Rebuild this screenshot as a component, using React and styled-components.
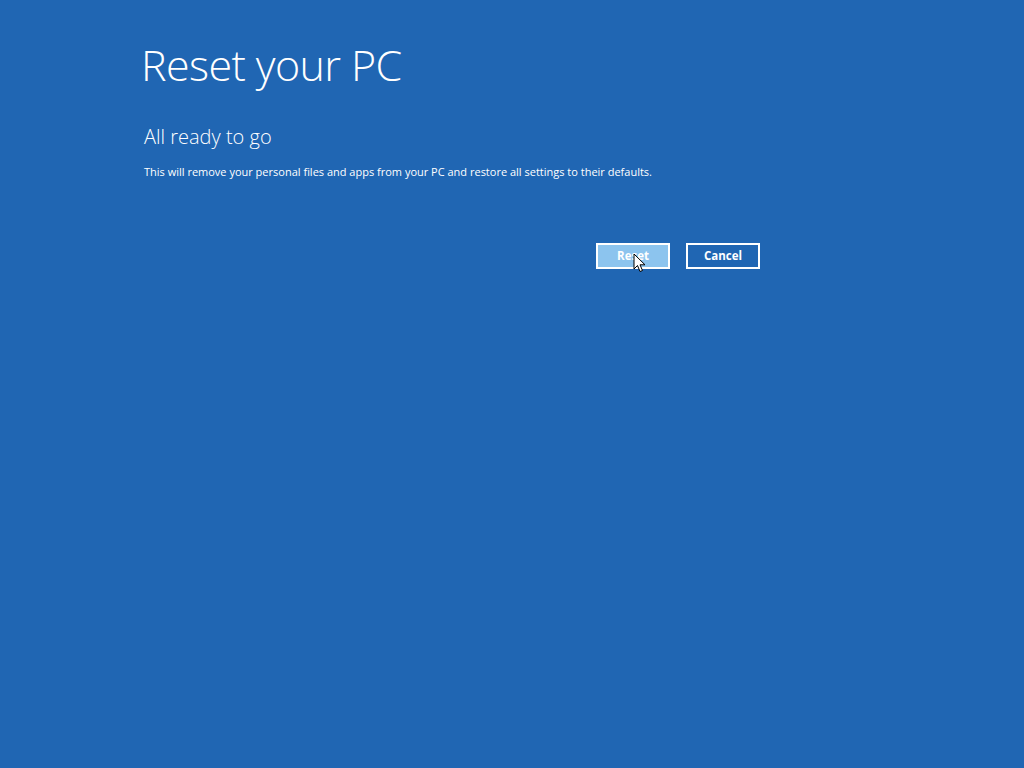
import styled, { createGlobalStyle } from "styled-components";

const GlobalStyle = createGlobalStyle`
  html, body {
    margin: 0;
    padding: 0;
    height: 100%;
    background: #2066b3;
    overflow: hidden;
  }
  #root {
    height: 100%;
  }
`;

const Screen = styled.main`
  width: 1024px;
  height: 768px;
  background: #2066b3;
  color: #ffffff;
  font-family: "Open Sans", "Noto Sans", sans-serif;
`;

const Content = styled.section`
  width: 619px;
  padding: 35px 0 0 141px;
  display: flex;
  flex-direction: column;
`;

const Title = styled.h1`
  margin: 0;
  font-weight: 300;
  font-size: 43px;
  line-height: 60px;
  letter-spacing: -0.6px;
`;

const Subtitle = styled.h2`
  margin: 28px 0 0 3px;
  font-weight: 300;
  font-size: 20px;
  line-height: 28px;
`;

const Description = styled.p`
  margin: 13px 0 0 3px;
  font-size: 11px;
  line-height: 16px;
`;

const ButtonRow = styled.div`
  display: flex;
  justify-content: flex-end;
  gap: 16px;
  margin-top: 63px;
`;

const Button = styled.button`
  position: relative;
  box-sizing: border-box;
  width: 74px;
  height: 26px;
  border: 2px solid #ffffff;
  background: ${(p) => (p.$hover ? "#8cc4ee" : "#2066b3")};
  color: #ffffff;
  font-family: "Open Sans", "Noto Sans", sans-serif;
  font-weight: 700;
  font-size: 11.5px;
  line-height: 20px;
  padding: 0 0 1px;
`;

const Pointer = styled.svg`
  position: absolute;
  left: 35px;
  top: 8px;
`;

const Cursor = () => (
  <Pointer width="14" height="21" viewBox="0 0 14 21">
    <path
      d="M1 1 L1 16 L4.5 12.5 L7 18.5 L9.5 17.5 L7 11.8 L12 11.8 Z"
      fill="#ffffff"
      stroke="#000000"
      strokeWidth="1"
      strokeLinejoin="round"
    />
  </Pointer>
);

const App = () => {
  return (
    <>
      <GlobalStyle />
      <Screen>
        <Content>
          <Title>Reset your PC</Title>
          <Subtitle>All ready to go</Subtitle>
          <Description>
            This will remove your personal files and apps from your PC and restore all settings to their defaults.
          </Description>
          <ButtonRow>
            <Button $hover>
              Reset
              <Cursor />
            </Button>
            <Button>Cancel</Button>
          </ButtonRow>
        </Content>
      </Screen>
    </>
  );
};

export default App;
